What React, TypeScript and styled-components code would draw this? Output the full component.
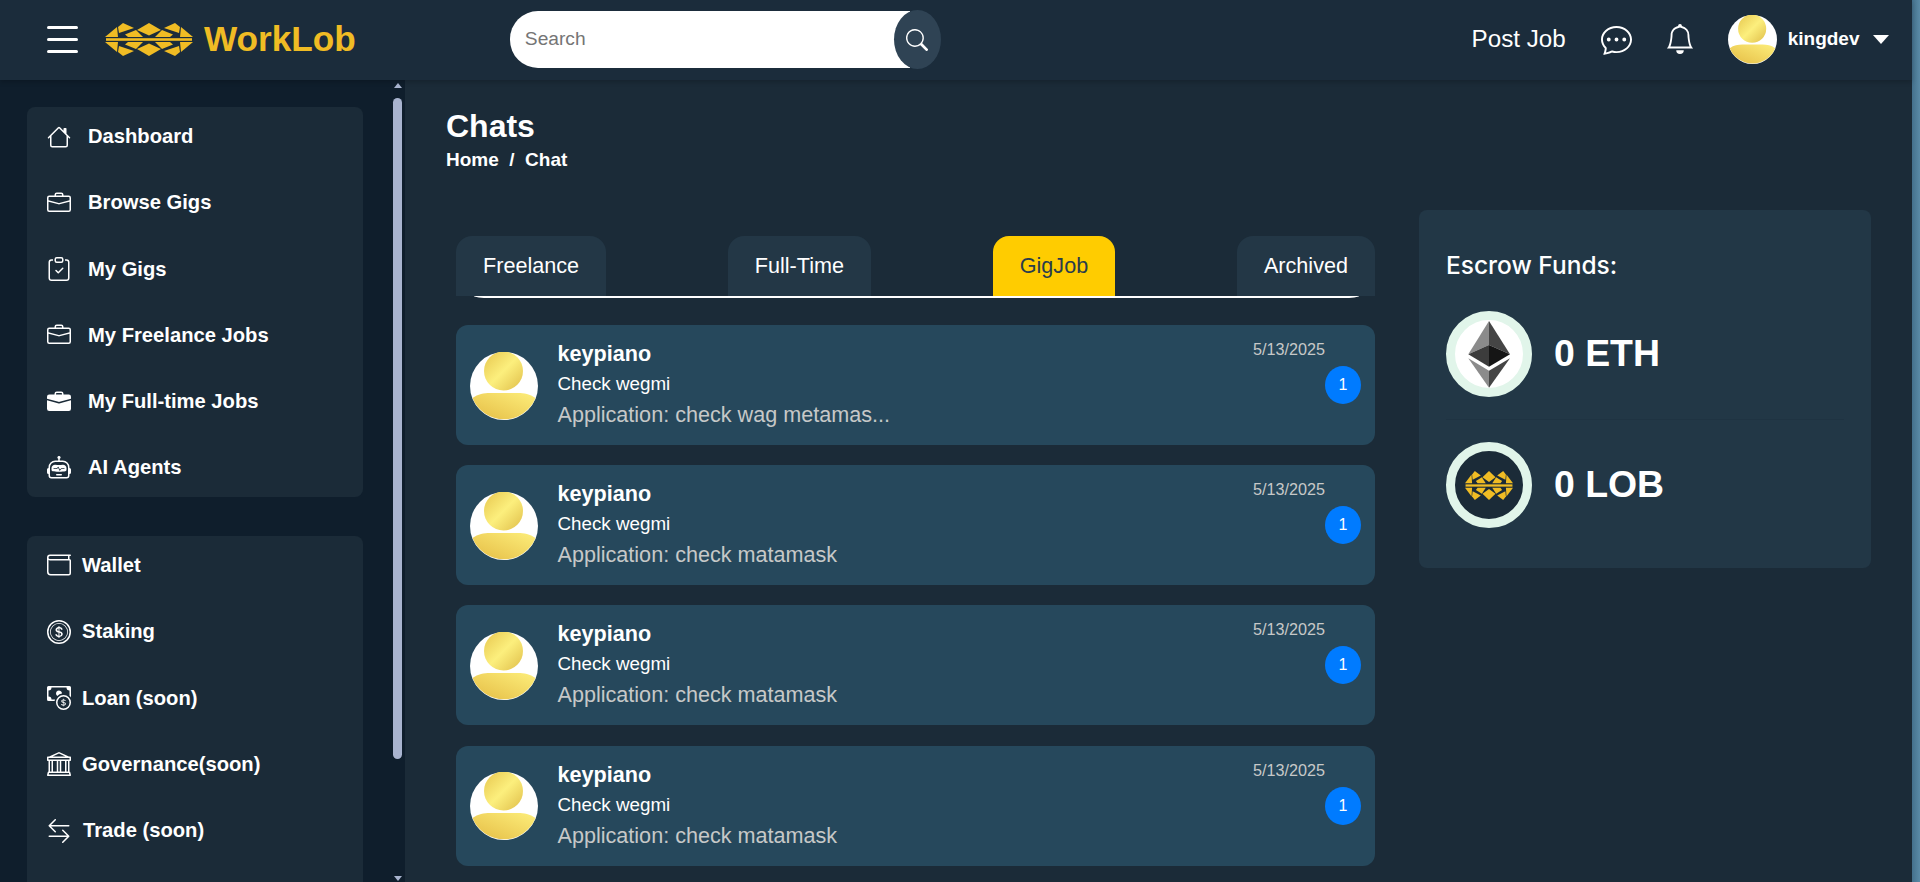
import React, { useId } from "react"
import styled, { createGlobalStyle } from "styled-components"
import {
    BsArrowLeftRight,
    BsBank,
    BsBell,
    BsBriefcase,
    BsBriefcaseFill,
    BsCashCoin,
    BsChatDots,
    BsClipboardCheck,
    BsCoin,
    BsHouse,
    BsRobot,
    BsSearch,
    BsWallet,
} from "react-icons/bs"

const GlobalStyle = createGlobalStyle`
html, body {
    margin: 0;
    height: 100%;
    overflow: hidden;
    background: #1b2b38;
}
* {
    box-sizing: border-box;
}
body {
    font-family: "Liberation Sans", Arial, sans-serif;
    color: #fff;
}
`

const Page = styled.div`
display: flex;
height: 100vh;
`

const Shell = styled.div`
flex: 1;
min-width: 0;
display: flex;
flex-direction: column;
`

const EdgeStrip = styled.div`
width: 8px;
background: linear-gradient(90deg, #44708c, #5a8aa6);
`

const Header = styled.header`
height: 80px;
flex-shrink: 0;
display: flex;
align-items: center;
padding: 0 23px 2px 47px;
background: #1b2c3b;
box-shadow: 0 2px 5px rgba(0, 0, 0, 0.2);
position: relative;
z-index: 2;
`

const Burger = styled.div`
width: 31px;
display: flex;
flex-direction: column;
gap: 9px;
margin-right: 27px;
span {
    height: 3px;
    border-radius: 2px;
    background: #fff;
}
`

const Brand = styled.div`
display: flex;
align-items: center;
gap: 11px;
font-size: 35.2px;
font-weight: 700;
color: #f0bc24;
margin-right: 154px;
`

const SearchBox = styled.div`
display: flex;
align-items: center;
height: 59px;
margin-top: 1px;
`

const SearchInput = styled.input`
width: 400px;
height: 57px;
border: 0;
outline: 0;
padding: 0 0 2px 15px;
background: #fff;
border-radius: 28px 0 0 28px;
font-family: inherit;
font-size: 19.2px;
&::placeholder {
    color: #757575;
}
`

const SearchButton = styled.div`
width: 47px;
height: 59px;
margin-left: -16px;
border-radius: 50%;
background: #2f4354;
display: flex;
align-items: center;
justify-content: center;
position: relative;
`

const HeaderRight = styled.div`
margin-left: auto;
display: flex;
align-items: center;
gap: 33px;
`

const PostJob = styled.span`
margin-right: 2px;
font-size: 24.2px;
`

const IconSlot = styled.span`
display: flex;
`

const Account = styled.div`
display: flex;
align-items: center;
font-size: 19px;
font-weight: 700;
gap: 11px;
`

const Caret = styled.span`
width: 0;
height: 0;
margin-left: 2.5px;
border-left: 8px solid transparent;
border-right: 8px solid transparent;
border-top: 9px solid #fff;
`

const Body = styled.div`
flex: 1;
min-height: 0;
display: flex;
`

const Sidebar = styled.aside`
width: 405px;
flex-shrink: 0;
display: flex;
padding-left: 27px;
background: #0f1e2c;
overflow: hidden;
`

const NavColumn = styled.nav`
width: 336px;
padding-top: 27px;
display: flex;
flex-direction: column;
gap: 39px;
`

const NavPanel = styled.div<{ $tail?: number }>`
flex-shrink: 0;
padding: 18px 0 ${(p) => p.$tail ?? 17.5}px 20px;
display: flex;
flex-direction: column;
gap: 43.3px;
background: #1b2b38;
border-radius: 8px;
`

const NavRow = styled.a<{ $gap: number }>`
height: 23px;
display: flex;
align-items: center;
gap: ${(p) => p.$gap}px;
font-size: 20.2px;
font-weight: 700;
color: #fff;
`

const Rail = styled.div`
width: 9px;
margin-left: 30px;
padding-top: 3px;
display: flex;
flex-direction: column;
align-items: center;
`

const RailArrow = styled.span<{ $down?: boolean }>`
width: 0;
height: 0;
border-left: 4.5px solid transparent;
border-right: 4.5px solid transparent;
${(p) => (p.$down ? "border-top" : "border-bottom")}: 5px solid #a9b4cf;
${(p) => (p.$down ? "margin-top: 117px;" : "")}
`

const RailThumb = styled.div`
width: 9px;
height: 661px;
flex-shrink: 0;
margin-top: 10px;
border-radius: 5px;
background: #a9b4cf;
`

const Main = styled.main`
flex: 1;
min-width: 0;
padding: 27px 41px 0;
background: #1b2b38;
overflow: hidden;
`

const Title = styled.h1`
margin: 0;
font-size: 32px;
line-height: 38px;
font-weight: 700;
`

const Crumbs = styled.div`
margin-top: 4px;
display: flex;
gap: 10.5px;
font-size: 19px;
line-height: 22px;
font-weight: 700;
`

const Content = styled.div`
margin-top: 39px;
display: flex;
align-items: flex-start;
gap: 44px;
`

const ChatColumn = styled.section`
width: 919px;
margin-left: 10px;
padding-top: 26px;
flex-shrink: 0;
`

const TabBar = styled.div`
display: flex;
justify-content: space-between;
`

const Tab = styled.button<{ $active?: boolean }>`
height: 60px;
padding: 0 27px;
border: 0;
border-radius: 16px 16px 0 0;
background: ${(p) => (p.$active ? "#ffcc00" : "#233746")};
color: ${(p) => (p.$active ? "#2a3c4c" : "#fff")};
font-family: inherit;
font-size: 21.6px;
`

const TabLine = styled.div`
height: 2px;
margin: 0 16px 27px 18px;
background: #fff;
border-radius: 0 0 16px 16px / 0 0 2px 2px;
`

const ChatList = styled.div`
display: flex;
flex-direction: column;
gap: 20.2px;
`

const ChatCard = styled.article`
height: 120px;
display: flex;
padding: 17px 14px 16px;
background: #26485c;
border-radius: 12px;
`

const ChatAvatar = styled.div`
align-self: center;
margin-right: 19.5px;
display: flex;
`

const ChatText = styled.div`
flex: 1;
min-width: 0;
`

const ChatName = styled.div`
font-size: 21.6px;
line-height: 24px;
font-weight: 700;
`

const ChatSubject = styled.div`
margin-top: 7px;
font-size: 18.8px;
line-height: 22px;
`

const ChatPreview = styled.div`
margin-top: 7px;
font-size: 21.6px;
line-height: 26px;
color: #c6c8c8;
`

const ChatMeta = styled.div`
margin-top: -2px;
display: flex;
flex-direction: column;
align-items: flex-end;
`

const ChatDate = styled.div`
margin-right: 36px;
font-size: 16.2px;
line-height: 18px;
color: #c6c8c8;
`

const Badge = styled.span`
width: 36px;
height: 38px;
margin-top: 8px;
border-radius: 50%;
background: #007bff;
display: flex;
align-items: center;
justify-content: center;
font-size: 16px;
`

const EscrowPanel = styled.section`
width: 452px;
height: 358px;
flex-shrink: 0;
padding: 41px 27px 0;
background: #223746;
border-radius: 8px;
`

const EscrowTitle = styled.h2`
margin: 0 0 32px;
font-family: Inter, sans-serif;
font-size: 24.5px;
line-height: 28px;
font-weight: 500;
`

const FundRow = styled.div`
display: flex;
align-items: center;
gap: 22px;
font-size: 37.4px;
font-weight: 700;
& + & {
    margin-top: 22px;
    padding-top: 22px;
    border-top: 1px solid #1f3342;
}
`

const FundLabel = styled.span`
margin-top: -2px;
`

const TokenRing = styled.div<{ $dark?: boolean }>`
width: 86px;
height: 86px;
border: 9px solid #e1f5ea;
border-radius: 50%;
background: ${(p) => (p.$dark ? "#1b2b38" : "#fff")};
display: flex;
align-items: center;
justify-content: center;
`

const logoTop = [
    "0,14 12,4 13,14",
    "18,0 29,5 14,10 13,4",
    "31,7 38,14 23,14 20,11.5",
    "44,0 56,7 44,12.5 32,7",
    "57,7 68,11.5 65,14 50,14",
    "70,0 75,4 74,10 59,5",
    "88,14 76,4 75,14",
]

const LogoMark = ({ width, height }: { width: number; height: number }) => (
    <svg width={width} height={height} viewBox="0 0 88 33" preserveAspectRatio="none" fill="#f0bc24">
        {logoTop.map((points) => (
            <polygon key={points} points={points} />
        ))}
        <g transform="matrix(1 0 0 -1 0 33)">
            {logoTop.map((points) => (
                <polygon key={points} points={points} />
            ))}
        </g>
        <rect x="1" y="15.2" width="86" height="2.6" />
    </svg>
)

const UserAvatar = ({ size }: { size: number }) => {
    const id = useId()
    return (
        <svg width={size} height={size} viewBox="0 0 68 68">
            <defs>
                <linearGradient id={id + "h"} x1="0" y1="0" x2="1" y2="1">
                    <stop offset="0" stopColor="#e6c64e" />
                    <stop offset="0.5" stopColor="#fcef7d" />
                    <stop offset="1" stopColor="#dfbd48" />
                </linearGradient>
                <linearGradient id={id + "b"} x1="0" y1="1" x2="1" y2="0">
                    <stop offset="0" stopColor="#e5bd45" />
                    <stop offset="1" stopColor="#fdee7b" />
                </linearGradient>
            </defs>
            <circle cx="34" cy="34" r="34" fill="#fff" />
            <circle cx="33.5" cy="19" r="19.5" fill={`url(#${id}h)`} />
            <path
                d="M2.5 46C8 42 14 41 20 41H48C54 41 60 42 65.5 46A34 34 0 0 1 2.5 46Z"
                fill={`url(#${id}b)`}
            />
        </svg>
    )
}

const EthMark = () => (
    <svg width="68" height="68" viewBox="9 9 68 68" style={{ margin: -1 }}>
        <polygon points="43,10 22.3,43.3 43,34" fill="#8b8b8b" />
        <polygon points="43,10 64,43.3 43,34" fill="#454545" />
        <polygon points="22.3,43.3 43,34 43,55.7" fill="#3c3c3c" />
        <polygon points="64,43.3 43,34 43,55.7" fill="#151515" />
        <polygon points="22.3,47.3 43,59.7 43,76.7" fill="#8b8b8b" />
        <polygon points="64,47.3 43,59.7 43,76.7" fill="#454545" />
    </svg>
)

const topNav = [
    { label: "Dashboard", icon: <BsHouse size={24} /> },
    { label: "Browse Gigs", icon: <BsBriefcase size={24} /> },
    { label: "My Gigs", icon: <BsClipboardCheck size={24} /> },
    { label: "My Freelance Jobs", icon: <BsBriefcase size={24} /> },
    { label: "My Full-time Jobs", icon: <BsBriefcaseFill size={24} /> },
    { label: "AI Agents", icon: <BsRobot size={24} /> },
]

const bottomNav = [
    { label: "Wallet", icon: <BsWallet size={24} />, gap: 11 },
    { label: "Staking", icon: <BsCoin size={24} />, gap: 11 },
    { label: "Loan (soon)", icon: <BsCashCoin size={24} />, gap: 11 },
    { label: "Governance(soon)", icon: <BsBank size={24} />, gap: 11 },
    { label: "Trade (soon)", icon: <BsArrowLeftRight size={24} />, gap: 12 },
]

const tabs = ["Freelance", "Full-Time", "GigJob", "Archived"]

const chats = [
    "Application: check wag metamas...",
    "Application: check matamask",
    "Application: check matamask",
    "Application: check matamask",
]

const App = () => {
    return (
        <Page>
            <GlobalStyle />
            <Shell>
                <Header>
                    <Burger>
                        <span />
                        <span />
                        <span />
                    </Burger>
                    <Brand>
                        <LogoMark width={88} height={33} />
                        WorkLob
                    </Brand>
                    <SearchBox>
                        <SearchInput placeholder="Search" />
                        <SearchButton>
                            <BsSearch size={22} color="#fff" />
                        </SearchButton>
                    </SearchBox>
                    <HeaderRight>
                        <PostJob>Post Job</PostJob>
                        <IconSlot>
                            <BsChatDots size={31} />
                        </IconSlot>
                        <IconSlot>
                            <BsBell size={30} />
                        </IconSlot>
                        <Account>
                            <UserAvatar size={49} />
                            kingdev
                            <Caret />
                        </Account>
                    </HeaderRight>
                </Header>
                <Body>
                    <Sidebar>
                        <NavColumn>
                            <NavPanel>
                                {topNav.map((item) => (
                                    <NavRow key={item.label} $gap={17}>
                                        {item.icon}
                                        {item.label}
                                    </NavRow>
                                ))}
                            </NavPanel>
                            <NavPanel $tail={80}>
                                {bottomNav.map((item) => (
                                    <NavRow key={item.label} $gap={item.gap}>
                                        {item.icon}
                                        {item.label}
                                    </NavRow>
                                ))}
                            </NavPanel>
                        </NavColumn>
                        <Rail>
                            <RailArrow />
                            <RailThumb />
                            <RailArrow $down />
                        </Rail>
                    </Sidebar>
                    <Main>
                        <Title>Chats</Title>
                        <Crumbs>
                            <span>Home</span>
                            <span>/</span>
                            <span>Chat</span>
                        </Crumbs>
                        <Content>
                            <ChatColumn>
                                <TabBar>
                                    {tabs.map((tab) => (
                                        <Tab key={tab} $active={tab === "GigJob"}>
                                            {tab}
                                        </Tab>
                                    ))}
                                </TabBar>
                                <TabLine />
                                <ChatList>
                                    {chats.map((preview, i) => (
                                        <ChatCard key={i}>
                                            <ChatAvatar>
                                                <UserAvatar size={68} />
                                            </ChatAvatar>
                                            <ChatText>
                                                <ChatName>keypiano</ChatName>
                                                <ChatSubject>Check wegmi</ChatSubject>
                                                <ChatPreview>{preview}</ChatPreview>
                                            </ChatText>
                                            <ChatMeta>
                                                <ChatDate>5/13/2025</ChatDate>
                                                <Badge>1</Badge>
                                            </ChatMeta>
                                        </ChatCard>
                                    ))}
                                </ChatList>
                            </ChatColumn>
                            <EscrowPanel>
                                <EscrowTitle>Escrow Funds:</EscrowTitle>
                                <FundRow>
                                    <TokenRing>
                                        <EthMark />
                                    </TokenRing>
                                    <FundLabel>0 ETH</FundLabel>
                                </FundRow>
                                <FundRow>
                                    <TokenRing $dark>
                                        <LogoMark width={48} height={29} />
                                    </TokenRing>
                                    <FundLabel>0 LOB</FundLabel>
                                </FundRow>
                            </EscrowPanel>
                        </Content>
                    </Main>
                </Body>
            </Shell>
            <EdgeStrip />
        </Page>
    )
}

export default App
